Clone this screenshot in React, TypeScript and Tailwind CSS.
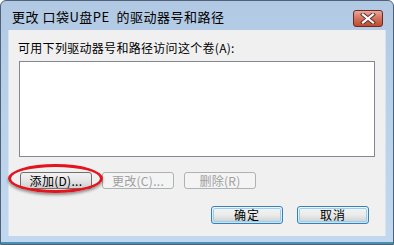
import React from "react";

const font = { fontFamily: '"Noto Sans CJK SC", "Liberation Sans", sans-serif' };

function Btn({ children, disabled, blue }: { children: React.ReactNode; disabled?: boolean; blue?: boolean }) {
  if (disabled) {
    return (
      <div className="w-[72px] h-[17px] rounded-[3px] border border-[#adb2b5] bg-[#f4f4f4] flex items-center justify-center text-[12px] leading-none text-[#a0a0a0] tracking-[0.3px]">
        {children}
      </div>
    );
  }
  if (blue) {
    return (
      <div className="w-[72px] h-[18px] rounded-[3px] border border-[#3c7fb1] bg-gradient-to-b from-[#eaf6fd] via-[#d9f0fc] to-[#bee6fd] p-[1px]">
        <div className="w-full h-full rounded-[2px] border border-[#9ad0ee] bg-gradient-to-b from-[#f2f2f2] via-[#ebebeb] to-[#d4d4d4] flex items-center justify-center text-[12px] leading-none text-black tracking-[1px]">
          {children}
        </div>
      </div>
    );
  }
  return (
    <div className="w-[72px] h-[17px] rounded-[3px] border border-[#707070] bg-gradient-to-b from-[#f2f2f2] via-[#e6e6e6] to-[#cfcfcf] flex items-center justify-center text-[12px] leading-none text-black tracking-[0.3px]">
      {children}
    </div>
  );
}

export default function App() {
  return (
    <div className="w-[394px] h-[245px] relative bg-white" style={font}>
      <div className="w-full h-full rounded-t-[6px] border border-[#4e6379] bg-gradient-to-b from-[#b1c9e2] via-[#bad2ea] to-[#c2d8ee] flex flex-col">
        {/* Title bar */}
        <div className="h-[29px] flex items-start justify-between pl-[11px] pr-[10px] shrink-0">
          <div className="pt-[8px] text-[13px] leading-[16px] text-black tracking-[0.5px] whitespace-pre">更改 口袋U盘PE  的驱动器号和路径</div>
          <div className="mt-[9px] w-[30px] h-[17px] rounded-[3px] border border-[#6b2b24] bg-gradient-to-b from-[#e8a99b] via-[#d0715c] to-[#c14a31] flex items-center justify-center">
            <svg width="16" height="11" viewBox="0 0 16 11">
              <path d="M3 1.5 L13 9.5 M13 1.5 L3 9.5" stroke="#5b2a22" strokeWidth="4" strokeLinecap="square" fill="none" />
              <path d="M3 1.5 L13 9.5 M13 1.5 L3 9.5" stroke="#ffffff" strokeWidth="2.2" strokeLinecap="square" fill="none" />
            </svg>
          </div>
        </div>
        {/* Client area */}
        <div className="mx-[7px] h-[206px] bg-[#f0f0f0] border-l border-r border-[#d7e3f0] flex flex-col shrink-0">
          <div className="pl-[9px] pt-[10px] text-[12px] leading-[16px] text-black tracking-[0.3px]">可用下列驱动器号和路径访问这个卷(A):</div>
          <div className="ml-[10px] mt-[5px] w-[356px] h-[96px] bg-white border border-[#828790]" />
          <div className="ml-[11px] mt-[15px] flex gap-[10px]">
            <Btn>添加(D)...</Btn>
            <Btn disabled>更改(C)...</Btn>
            <Btn disabled>删除(R)</Btn>
          </div>
          <div className="mt-[17px] mr-[16px] flex justify-end gap-[14px]">
            <Btn blue>确定</Btn>
            <Btn blue>取消</Btn>
          </div>
        </div>
        <div className="flex-1" />
        <div className="h-[2px] bg-[#4a8fb0]" />
      </div>
      {/* Red annotation ellipse */}
      <div className="absolute left-[8px] top-[164px] w-[95px] h-[29px] rounded-[50%] border-[3px] border-[#e3141b] shadow-[0_2px_3px_rgba(0,0,0,0.4)]" />
    </div>
  );
}
